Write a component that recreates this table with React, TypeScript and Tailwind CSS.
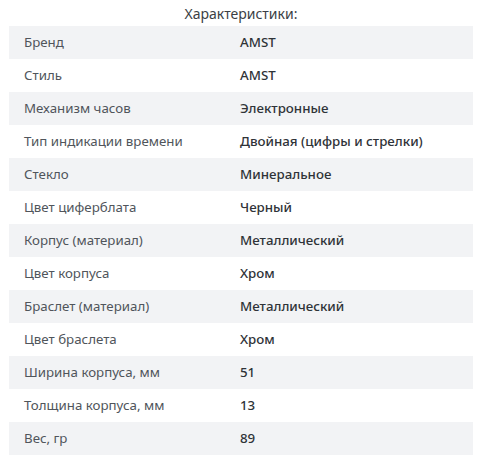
const rows: [string, string][] = [
  ['Бренд', 'AMST'],
  ['Стиль', 'AMST'],
  ['Механизм часов', 'Электронные'],
  ['Тип индикации времени', 'Двойная (цифры и стрелки)'],
  ['Стекло', 'Минеральное'],
  ['Цвет циферблата', 'Черный'],
  ['Корпус (материал)', 'Металлический'],
  ['Цвет корпуса', 'Хром'],
  ['Браслет (материал)', 'Металлический'],
  ['Цвет браслета', 'Хром'],
  ['Ширина корпуса, мм', '51'],
  ['Толщина корпуса, мм', '13'],
  ['Вес, гр', '89'],
];

export default function App() {
  return (
    <div className="w-[482px] h-[460px] bg-white font-['Noto_Sans',sans-serif] text-[13.3px]">
      <div className="h-[26px] flex items-center justify-center text-[14px] text-[#3b3f45]">Характеристики:</div>
      <div className="ml-[9px] w-[464px]">
        {rows.map(([label, value], i) => (
          <div key={label} className={`flex items-center h-[33px] ${i % 2 === 0 ? 'bg-[#f2f3f5]' : 'bg-white'}`}>
            <div className="w-[231px] pl-[15px] text-[#50555b]">{label}</div>
            <div className="font-medium text-[#2f3338]">{value}</div>
          </div>
        ))}
      </div>
    </div>
  );
}
